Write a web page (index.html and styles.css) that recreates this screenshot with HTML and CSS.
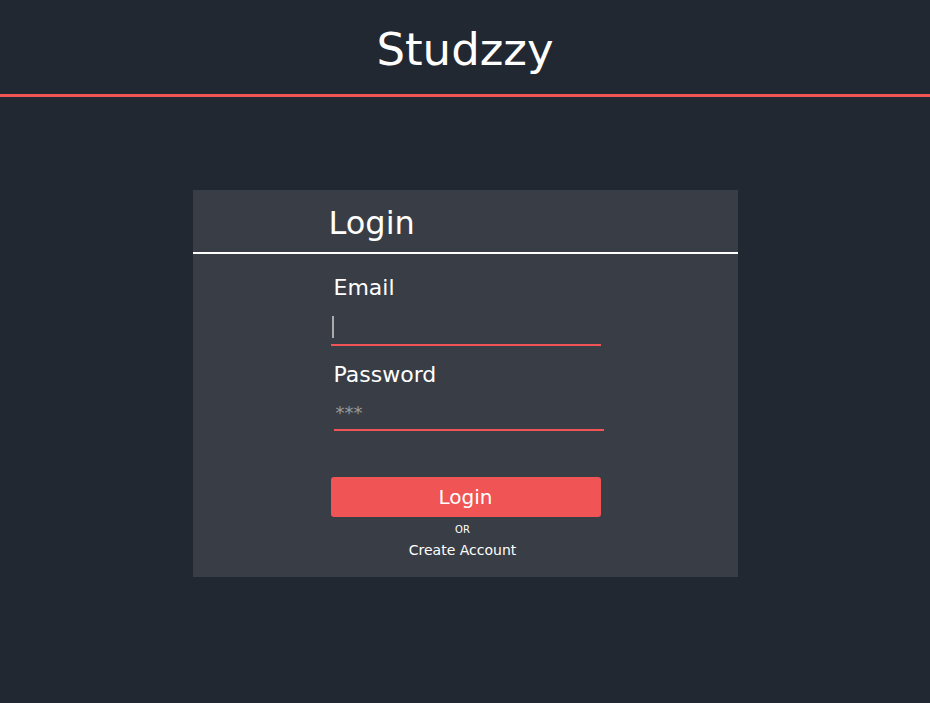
FILE: index.html
```html
<!DOCTYPE html>
<html lang="en">
<head>
<meta charset="utf-8">
<title>Studzzy</title>
<link rel="stylesheet" href="styles.css">
</head>
<body>
<header class="topbar">
  <h1 class="brand">Studzzy</h1>
</header>
<main class="card">
  <h2 class="card-title">Login</h2>
  <form class="login-form">
    <label class="field-label" for="email">Email</label>
    <input class="field-input field-input-email" id="email" type="email" autofocus>
    <label class="field-label field-label-pw" for="password">Password</label>
    <input class="field-input field-input-pw" id="password" type="password" placeholder="***">
    <button class="login-btn" type="button">Login</button>
    <div class="alt">
      <span class="or">OR</span>
      <a class="create" href="#">Create Account</a>
    </div>
  </form>
</main>
</body>
</html>
```
FILE: styles.css
```css
html, body {
  margin: 0;
  padding: 0;
}
body {
  background: #222831;
  font-family: "DejaVu Sans", sans-serif;
  color: #ffffff;
  min-height: 703px;
}
.topbar {
  box-sizing: border-box;
  height: 97px;
  padding-top: 23px;
  border-bottom: 3px solid #f05454;
  text-align: center;
}
.brand {
  margin: 0;
  font-size: 45px;
  font-weight: normal;
  line-height: normal;
}
.card {
  width: 545px;
  margin: 93px auto 0;
  background: #393e46;
  padding-bottom: 19px;
}
.card-title {
  margin: 0;
  padding: 15px 0 10px 136px;
  font-size: 32px;
  font-weight: normal;
  line-height: 37px;
  border-bottom: 2px solid #ffffff;
}
.login-form {
  width: 270px;
  margin: 0 auto;
  padding-top: 21px;
  padding-left: 1px;
  display: flex;
  flex-direction: column;
}
.field-label {
  display: block;
  font-size: 22px;
  line-height: 26px;
  margin-left: 3px;
  margin-bottom: 10px;
}
.field-label-pw {
  margin-top: 16px;
  margin-bottom: 8px;
}
.field-input {
  box-sizing: border-box;
  width: 270px;
  height: 35px;
  margin: 0;
  padding: 0 1px;
  border: none;
  border-bottom: 2px solid #f05454;
  background: transparent;
  color: #ffffff;
  font-family: "DejaVu Sans", sans-serif;
  font-size: 18px;
  outline: none;
  caret-color: #aaaaaa;
}
.field-input-email {
  background: linear-gradient(#a9abae, #a9abae) 1px 5px / 2px 22px no-repeat;
}
.field-input-pw {
  margin-left: 3px;
  padding-left: 2px;
}
.field-input::placeholder {
  color: #9a9a9a;
}
.login-btn {
  margin-top: 46px;
  width: 270px;
  height: 40px;
  border: none;
  border-radius: 3px;
  background: #f05454;
  color: #ffffff;
  font-family: "DejaVu Sans", sans-serif;
  font-size: 20px;
  padding: 0;
}
.alt {
  display: flex;
  flex-direction: column;
  align-items: center;
  margin-right: 6px;
  margin-top: 7px;
}
.or {
  font-size: 10px;
  line-height: 12px;
}
.create {
  margin-top: 6px;
  font-size: 14px;
  line-height: 16px;
  color: #ffffff;
  text-decoration: none;
}
```
